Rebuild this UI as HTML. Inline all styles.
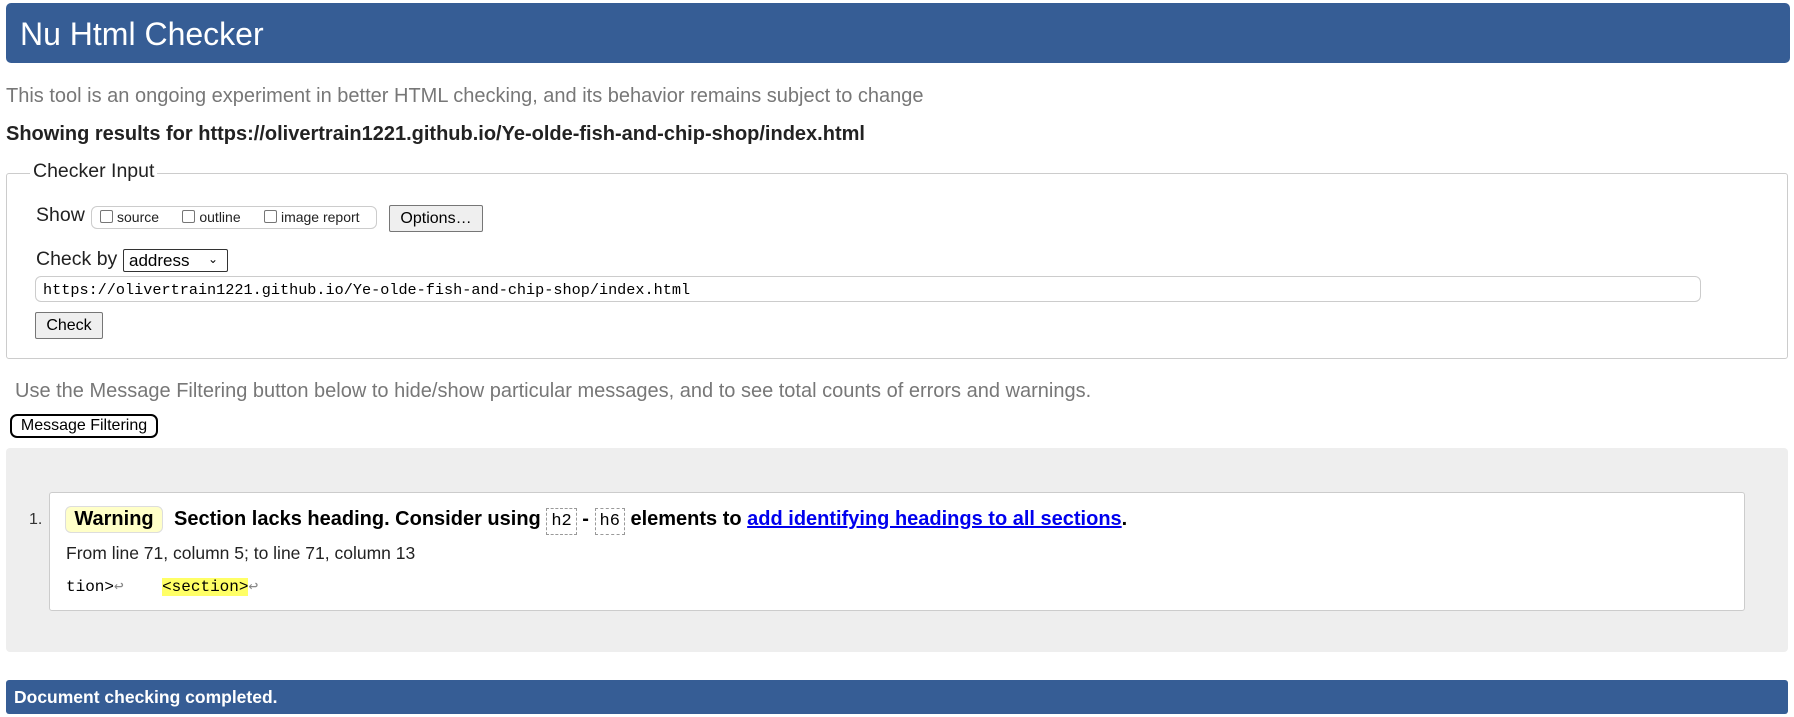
<!DOCTYPE html>
<html><head><meta charset="utf-8"><style>
*{box-sizing:border-box;margin:0;padding:0}
body{width:1794px;height:717px;background:#fff;font-family:"Liberation Sans",Arial,sans-serif;position:relative;overflow:hidden;color:#000}
.a{position:absolute;white-space:nowrap}
.hdr{left:6px;top:3px;width:1784px;height:60px;background:#365d95;border-radius:5px;color:#fff;font-size:32px;padding:13px 0 0 14px}
.btn{background:#efefef;border:1px solid #767676;border-radius:2px;font-size:16px;text-align:center}
.cb{display:inline-block;width:13px;height:13px;border:1px solid #767676;border-radius:2px;vertical-align:-1px;margin-right:4px;background:#fff}
code{font-family:"Liberation Mono",monospace}
</style></head><body>
<div class="a hdr">Nu Html Checker</div>
<div class="a" style="left:6px;top:85px;font-size:20px;color:#777">This tool is an ongoing experiment in better HTML checking, and its behavior remains subject to change</div>
<div class="a" style="left:6px;top:123px;font-size:20px;font-weight:bold;color:#222">Showing results for https://olivertrain1221.github.io/Ye-olde-fish-and-chip-shop/index.html</div>
<div class="a" style="left:6px;top:173px;width:1782px;height:186px;border:1px solid #ccc;border-radius:3px"></div>
<div class="a" style="left:30px;top:160px;font-size:19.5px;background:#fff;padding:0 3px;color:#222">Checker Input</div>
<div class="a" style="left:36px;top:204px;font-size:19.5px;color:#222">Show</div>
<div class="a" style="left:91px;top:206px;width:286px;height:23px;border:1px solid #ccc;border-radius:6px;font-size:14px;padding:2px 0 0 8px;color:#222"><span class="cb"></span>source&nbsp;&nbsp;&nbsp;&nbsp;&nbsp;&nbsp;<span class="cb"></span>outline&nbsp;&nbsp;&nbsp;&nbsp;&nbsp;&nbsp;<span class="cb"></span>image report</div>
<div class="a btn" style="left:389px;top:205px;width:94px;height:27px;line-height:25px">Options…</div>
<div class="a" style="left:36px;top:248px;font-size:19.5px;color:#222">Check by</div>
<div class="a" style="left:123px;top:249px;width:105px;height:23px;border:1px solid #333;border-radius:2px;font-size:17px;padding:1px 0 0 5px">address <span style="position:absolute;right:9px;top:2px;font-size:12px">&#8964;</span></div>
<div class="a" style="left:35px;top:276px;width:1666px;height:26px;border:1px solid #ccc;border-radius:6px;font-size:15.2px;padding:4px 0 0 7px"><code>https://olivertrain1221.github.io/Ye-olde-fish-and-chip-shop/index.html</code></div>
<div class="a btn" style="left:35px;top:312px;width:68px;height:27px;line-height:25px">Check</div>
<div class="a" style="left:15px;top:380px;font-size:20px;color:#777">Use the Message Filtering button below to hide/show particular messages, and to see total counts of errors and warnings.</div>
<div class="a" style="left:10px;top:414px;width:148px;height:24px;border:2px solid #000;border-radius:7px;font-size:16px;text-align:center;line-height:20px">Message Filtering</div>
<div class="a" style="left:6px;top:448px;width:1782px;height:204px;background:#eee;border-radius:4px"></div>
<div class="a" style="left:49px;top:492px;width:1696px;height:119px;background:#fff;border:1px solid #ccc;border-radius:3px"></div>
<div class="a" style="left:29px;top:511px;font-size:16px;color:#333">1.</div>
<div class="a" style="left:65px;top:506px;width:98px;height:27px;background:#ffffc8;border:1px solid #ddd;border-radius:6px;font-size:20px;font-weight:bold;text-align:center;line-height:25px">Warning</div>
<div class="a" style="left:174px;top:507px;font-size:20px;font-weight:bold;line-height:25px">Section lacks heading. Consider using <code style="font-weight:normal;font-size:17px;border:1px dashed #999;padding:3px 4px">h2</code> - <code style="font-weight:normal;font-size:17px;border:1px dashed #999;padding:3px 4px">h6</code> elements to <span style="color:#00e;text-decoration:underline">add identifying headings to all sections</span>.</div>
<div class="a" style="left:66px;top:543px;font-size:17.5px;color:#222">From line 71, column 5; to line 71, column 13</div>
<div class="a" style="left:66px;top:576px;font-size:16px"><code>tion&gt;<span style="color:#888">↩</span>&nbsp;&nbsp;&nbsp;&nbsp;<span style="background:#ffff66">&lt;section&gt;</span><span style="color:#888">↩</span></code></div>
<div class="a" style="left:6px;top:680px;width:1782px;height:34px;background:#365d95;border-radius:3px;color:#fff;font-size:17.5px;font-weight:bold;padding:7px 0 0 8px">Document checking completed.</div>
</body></html>
